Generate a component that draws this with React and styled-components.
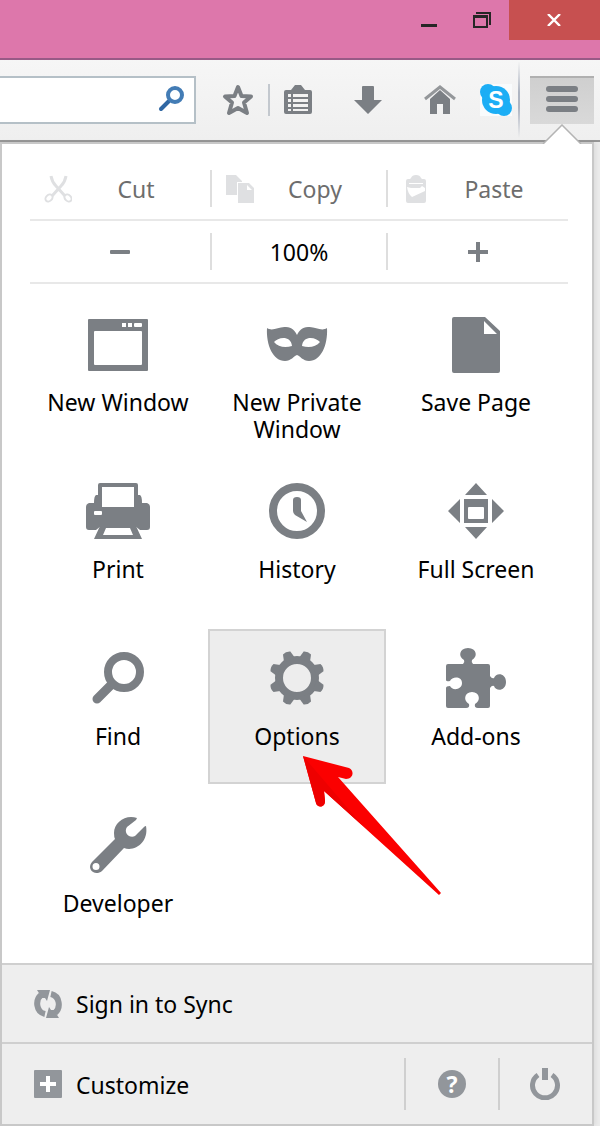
import React from 'react';
import styled, { createGlobalStyle, css } from 'styled-components';

const INK = '#7b7f84';
const SOFT = '#92969b';
const FAINT = '#dfe0e2';

const GlobalStyle = createGlobalStyle`
  *, *::before, *::after { box-sizing: border-box; }
  body { margin: 0; background: #ebebeb; }
  body, button, input {
    font-family: "Noto Sans", "Open Sans", "Liberation Sans", sans-serif;
    font-size: 23px;
    line-height: 27px;
    color: #000;
  }
  svg { display: block; flex: none; }
`;

const plainButton = css`
  appearance: none;
  margin: 0;
  padding: 0;
  border: 0;
  background: none;
  cursor: pointer;
`;

const Page = styled.div`
  width: 100%;
`;

const TitleBar = styled.header`
  display: flex;
  justify-content: flex-end;
  align-items: flex-start;
  height: 60px;
  background: #dd77ab;
  border-bottom: 2px solid #985a86;
`;

const WindowButton = styled.button`
  ${plainButton}
  display: flex;
  align-items: center;
  justify-content: center;
  width: ${p => (p.$close ? 91 : 53)}px;
  height: 40px;
  background: ${p => (p.$close ? '#c75050' : 'transparent')};
`;

const Toolbar = styled.div`
  display: flex;
  align-items: center;
  height: 82px;
  padding-right: 6px;
  background: linear-gradient(#f6f6f6, #efefef);
  border-bottom: 2px solid #979797;
`;

const SearchBox = styled.form`
  display: flex;
  align-items: center;
  flex: 1;
  min-width: 0;
  height: 48px;
  padding-right: 8px;
  background: #fff;
  border: 2px solid #b5c0c7;
  border-left: 0;
`;

const SearchInput = styled.input`
  flex: 1;
  min-width: 0;
  height: 44px;
  padding: 0 12px;
  border: 0;
  outline: 0;
  background: transparent;
`;

const ToolButton = styled.button`
  ${plainButton}
  width: 32px;
  height: 32px;
  margin-left: ${p => p.$gap || 0}px;
`;

const ToolDivider = styled.span`
  width: 2px;
  height: ${p => (p.$tall ? 76 : 32)}px;
  margin-left: ${p => p.$gap}px;
  background: ${p => (p.$tall ? 'linear-gradient(#f4f4f4, #aeb5c2 40%, #aeb5c2 60%, #efefef)' : '#c3c8ce')};
`;

const MenuButton = styled.button`
  ${plainButton}
  display: flex;
  justify-content: center;
  align-items: flex-start;
  width: 64px;
  height: 48px;
  margin-left: 10px;
  padding-top: 6px;
  background: linear-gradient(#cfcfcf, #d9d9d9);
  border-top: 2px solid #b0b0b0;
`;

const Panel = styled.main`
  position: relative;
  margin-right: 6px;
  background: #fff;
  border: 2px solid #c8c8c8;
  box-shadow: 2px 0 4px rgba(0, 0, 0, 0.06);
`;

const Pointer = styled.svg`
  position: absolute;
  right: 10px;
  top: -20px;
`;

const EditSection = styled.section`
  padding: 14px 24px 0 28px;
`;

const EditRow = styled.div`
  display: grid;
  grid-template-columns: 91fr 88fr 90fr;
  align-items: center;
  height: 63px;
  border-bottom: 2px solid #e8e8e8;
`;

const EditCell = styled.button`
  ${plainButton}
  display: flex;
  align-items: center;
  justify-content: center;
  height: 37px;
  padding-left: ${p => (p.$labelled ? 14 : 0)}px;
  border-right: 2px solid #dedede;
  color: #000;
  &:last-child { border-right: 0; }
  &:disabled { color: #6d6d6d; cursor: default; }
`;

const RowText = styled.span`
  padding-top: 2px;
`;

const EditLabel = styled(RowText)`
  flex: 1;
  padding-right: 10px;
  text-align: center;
`;

const TileGrid = styled.section`
  display: grid;
  grid-template-columns: repeat(3, 1fr);
  grid-auto-rows: 155px;
  gap: 12px 1px;
  padding: 11px 27px 12px;
`;

const Tile = styled.button`
  ${plainButton}
  position: relative;
  display: flex;
  flex-direction: column;
  align-items: center;
  gap: 12px;
  padding-top: 16px;
  border: 2px solid ${p => (p.$active ? '#d3d3d3' : 'transparent')};
  background: ${p => (p.$active ? '#ededed' : 'transparent')};
`;

const TileLabel = styled.span`
  max-width: 160px;
  text-align: center;
`;

const Callout = styled.svg`
  position: absolute;
  left: 93px;
  top: 125px;
  z-index: 1;
  pointer-events: none;
`;

const FooterRow = styled.div`
  display: flex;
  align-items: center;
  height: ${p => p.$height}px;
  background: #eee;
  border-top: 2px solid #cfcfcf;
`;

const FooterAction = styled.button`
  ${plainButton}
  display: flex;
  align-items: center;
  flex: 1;
  gap: 14px;
  height: 52px;
  padding-left: 32px;
`;

const FooterIcon = styled.button`
  ${plainButton}
  display: flex;
  align-items: center;
  justify-content: center;
  width: 94px;
  height: 52px;
  border-left: 2px solid #cfcfcf;
`;

const HelpBadge = styled.span`
  width: 28px;
  height: 28px;
  border-radius: 50%;
  background: ${SOFT};
  color: #fff;
  font-size: 23px;
  font-weight: 700;
  line-height: 28px;
  text-align: center;
`;

const Svg = ({ size = 64, fill = INK, children }) => (
  <svg width={size} height={size} viewBox={`0 0 ${size} ${size}`} fill={fill} aria-hidden="true">
    {children}
  </svg>
);

const icons = {
  window: (
    <path fillRule="evenodd" d="M3 6H61Q62 6 62 7V57Q62 58 61 58H3Q2 58 2 57V7Q2 6 3 6ZM9 18Q8 18 8 19V51Q8 52 9 52H55Q56 52 56 51V19Q56 18 55 18ZM36 10V14H40V10ZM42 10V14H46V10ZM49 10Q48 10 48 11V13Q48 14 49 14H55Q56 14 56 13V11Q56 10 55 10Z" />
  ),
  mask: (
    <path fillRule="evenodd" d="M2 15C8 19 14 13 21 14C27 14 30 18 32 22C34 18 37 14 43 14C50 13 56 19 62 15C63 32 56 48 44 48C38 48 35 43 32 42C29 43 26 48 20 48C8 48 1 32 2 15ZM9 29C13 24 26 22 27 33C20 35 13 34 9 29ZM55 29C51 24 38 22 37 33C44 35 51 34 55 29Z" />
  ),
  page: <path fillRule="evenodd" d="M10 4H41L56 18V58Q56 60 54 60H10Q8 60 8 58V6Q8 4 10 4ZM40 8V21H53Z" />,
  print: (
    <>
      <path fillRule="evenodd" d="M14 3H50Q52 3 52 5V15H54Q56 16 56 23H61Q64 24 64 27V47Q64 50 61 50H54L49 46H15L10 50H3Q0 50 0 47V27Q0 24 3 23H8Q8 16 10 15H12V5Q12 3 14 3ZM16 7V27H48V7ZM9 31Q8 31 8 32V34Q8 35 9 35H15Q16 35 16 34V32Q16 31 15 31Z" />
      <path fillRule="evenodd" d="M14 46H50L56 59H8ZM20 48L17 55H47L44 48Z" />
    </>
  ),
  history: (
    <>
      <circle cx="32" cy="31" r="24" fill="none" stroke={INK} strokeWidth="8" />
      <path d="M28 20Q28 17 32 17Q36 17 36 20V31L42 42L30 35Q28 33 28 31Z" />
    </>
  ),
  fullscreen: (
    <path fillRule="evenodd" d="M32 3L43 15H21ZM32 59L43 47H21ZM4 31L16 19V43ZM60 31L48 19V43ZM20 19H44V43H20ZM25 27Q24 27 24 28V38Q24 39 25 39H39Q40 39 40 38V28Q40 27 39 27Z" />
  ),
  find: (
    <g fill="none" stroke={INK}>
      <path d="M11 52L26 37" strokeWidth="9" strokeLinecap="round" />
      <circle cx="38" cy="25" r="16" strokeWidth="8" />
    </g>
  ),
  gear: (
    <g transform="translate(32 31)">
      <circle r="18" fill="none" stroke={INK} strokeWidth="8" />
      {[0, 1, 2, 3, 4, 5, 6, 7].map(n => (
        <path key={n} d="M-6 -19L-4 -27Q0 -29 4 -27L6 -19Z" transform={`rotate(${22.5 + n * 45})`} />
      ))}
    </g>
  ),
  puzzle: (
    <path d="M4 17H19Q21 15 20 13C14 10 15 1 24 1S34 10 28 13Q27 15 29 17H44Q46 17 46 19V29Q48 32 50 31C52 25 62 26 62 35S52 45 50 39Q48 38 46 41V59Q46 61 44 61H34Q30 61 31 57C37 54 36 45 28 45S19 54 25 57Q26 61 22 61H4Q2 61 2 59V41Q2 39 6 39C8 44 18 43 18 36S8 29 6 34Q2 35 2 33V19Q2 17 4 17Z" />
  ),
  wrench: (
    <path fillRule="evenodd" d="M51 4C40 0 28 8 28 19Q28 23 29 25L6 48C0 55 9 63 16 57L38 34C49 38 63 28 60 12Q59 12 58 13L49 22C44 25 37 19 41 13L50 6ZM10 49A3.5 3.5 0 1 1 10 56A3.5 3.5 0 1 1 10 49Z" />
  ),
};

const tiles = [
  ['window', 'New Window'],
  ['mask', 'New Private Window'],
  ['page', 'Save Page'],
  ['print', 'Print'],
  ['history', 'History'],
  ['fullscreen', 'Full Screen'],
  ['find', 'Find'],
  ['gear', 'Options'],
  ['puzzle', 'Add-ons'],
  ['wrench', 'Developer'],
];

const editActions = [
  {
    label: 'Cut',
    icon: (
      <g fill="none" stroke={FAINT}>
        <path d="M7 1Q8 7 12 11L21 21M22 1Q21 7 17 11L8 21" strokeWidth="3" />
        <ellipse cx="5" cy="23" rx="3" ry="4" transform="rotate(45 5 23)" strokeWidth="2" />
        <ellipse cx="24" cy="23" rx="3" ry="4" transform="rotate(-45 24 23)" strokeWidth="2" />
      </g>
    ),
  },
  {
    label: 'Copy',
    icon: (
      <path fillRule="evenodd" fill={FAINT} d="M0 0H10L16 6V7H11V20H0ZM12 8H23L28 13V28H12ZM21 10V15H26Z" />
    ),
  },
  {
    label: 'Paste',
    icon: (
      <path fillRule="evenodd" fill={FAINT} d="M9 3Q10 0 14 0T19 3L20 4H22Q24 4 24 6V26Q24 28 22 28H6Q4 28 4 26V6Q4 4 6 4H8ZM7 8V9H21V8ZM5 12Q6 19 10 22L23 16V13L20 11L18 13H9Z" />
    ),
  },
];

const syncHalf = (
  <>
    <path d="M11 24C2 22 1 10 7 5" fill="none" stroke={SOFT} strokeWidth="6" />
    <path d="M3 0H16L13 11L11 8L8 8Z" />
  </>
);

export default function App() {
  return (
    <Page>
      <GlobalStyle />
      <TitleBar>
        <WindowButton aria-label="Minimize">
          <svg width="17" height="20" viewBox="0 0 17 20"><path d="M0 14H16V17H0Z" fill="#262626" /></svg>
        </WindowButton>
        <WindowButton aria-label="Restore">
          <svg width="19" height="16" viewBox="0 0 19 16">
            <path fillRule="evenodd" fill="#262626" d="M3 0H18V13H16V2H3ZM0 3H15V16H0ZM2 6V14H13V6Z" />
          </svg>
        </WindowButton>
        <WindowButton $close aria-label="Close">
          <svg width="15" height="12" viewBox="0 0 15 12"><path d="M1 0L13 12M13 0L1 12" stroke="#fff" strokeWidth="2.4" /></svg>
        </WindowButton>
      </TitleBar>

      <Toolbar>
        <SearchBox onSubmit={e => e.preventDefault()}>
          <SearchInput type="text" aria-label="Search" />
          <ToolButton aria-label="Search">
            <Svg size={32}>
              <path d="M7 25L15 17" stroke="#3067a3" strokeWidth="4" strokeLinecap="round" />
              <circle cx="21" cy="11" r="7" fill="none" stroke="#437cb5" strokeWidth="4" />
            </Svg>
          </ToolButton>
        </SearchBox>
        <ToolButton $gap={26} aria-label="Bookmark this page">
          <Svg size={32}>
            <path d="M16 3L19.5 12L29 12.5L22 18.5L25 29L16 24L7 29L10 18.5L3 12.5L12.5 12Z" fill="none" stroke={INK} strokeWidth="4" strokeLinejoin="round" />
          </Svg>
        </ToolButton>
        <ToolDivider $gap={14} />
        <ToolButton $gap={12} aria-label="Show bookmarks">
          <Svg size={32}>
            <path fillRule="evenodd" d="M4 6H9L13 1H19L23 6H28Q30 6 30 8V28Q30 30 28 30H4Q2 30 2 28V8Q2 6 4 6ZM6 10V13H9V10ZM11 10V13H26V10ZM6 15V18H9V15ZM11 15V18H26V15ZM6 20V23H9V20ZM11 20V23H26V20ZM6 25V27H9V25ZM11 25V27H26V25Z" />
          </Svg>
        </ToolButton>
        <ToolButton $gap={38} aria-label="Downloads">
          <Svg size={32}><path d="M11 2H21Q22 2 22 3V16H30L16 30L2 16H10V3Q10 2 11 2Z" /></Svg>
        </ToolButton>
        <ToolButton $gap={40} aria-label="Home">
          <Svg size={32}>
            <path d="M1 15L16 3L31 15" fill="none" stroke="#94979a" strokeWidth="3" />
            <path d="M6 15L16 6L26 15V30H19V20H13V30H6Z" />
          </Svg>
        </ToolButton>
        <ToolButton $gap={24} aria-label="Skype">
          <Svg size={32} fill="#1caef5">
            <rect width="32" height="32" fill="#f9fbfc" />
            <circle cx="8" cy="8" r="8" />
            <circle cx="24" cy="24" r="8" />
            <circle cx="16" cy="16" r="14" />
            <text x="16" y="24" fill="#fff" fontFamily="Liberation Sans, sans-serif" fontWeight="700" fontSize="23" textAnchor="middle">S</text>
          </Svg>
        </ToolButton>
        <ToolDivider $tall $gap={6} />
        <MenuButton aria-label="Open menu" aria-expanded="true">
          <Svg size={32}>
            <rect y="2" width="32" height="6" rx="3" />
            <rect y="12" width="32" height="6" rx="3" />
            <rect y="22" width="32" height="6" rx="3" />
          </Svg>
        </MenuButton>
      </Toolbar>

      <Panel>
        <Pointer width="40" height="20" viewBox="0 0 40 20" aria-hidden="true">
          <path d="M1 20L20 1L39 20Z" fill="#fff" />
          <path d="M1 20L20 1L39 20" fill="none" stroke="#b4b4b4" strokeWidth="1.5" />
        </Pointer>
        <EditSection>
          <EditRow>
            {editActions.map(({ label, icon }) => (
              <EditCell key={label} $labelled disabled>
                <Svg size={28}>{icon}</Svg>
                <EditLabel>{label}</EditLabel>
              </EditCell>
            ))}
          </EditRow>
          <EditRow>
            <EditCell aria-label="Zoom out">
              <Svg size={20}><rect y="8" width="20" height="4" rx="1" /></Svg>
            </EditCell>
            <EditCell><RowText>100%</RowText></EditCell>
            <EditCell aria-label="Zoom in">
              <Svg size={20}><path d="M8 0H12V8H20V12H12V20H8V12H0V8H8Z" /></Svg>
            </EditCell>
          </EditRow>
        </EditSection>

        <TileGrid>
          {tiles.map(([icon, label]) => (
            <Tile key={label} $active={label === 'Options'}>
              <Svg>{icons[icon]}</Svg>
              <TileLabel>{label}</TileLabel>
              {label === 'Options' && (
                <Callout width="140" height="140" viewBox="0 0 140 140" aria-hidden="true">
                  <path d="M0 0L46 12C52 15 50 23 43 23L35 21L138 137L136 139L21 35L22 45C22 52 14 52 13 47Z" fill="#fb0000" />
                  <path d="M0 0L60 70L21 35L22 45C22 52 14 52 13 47Z" fill="#ee0000" />
                </Callout>
              )}
            </Tile>
          ))}
        </TileGrid>

        <FooterRow $height={79}>
          <FooterAction>
            <Svg size={28} fill={SOFT}>
              {syncHalf}
              <g transform="rotate(180 14 14)">{syncHalf}</g>
            </Svg>
            <RowText>Sign in to Sync</RowText>
          </FooterAction>
        </FooterRow>
        <FooterRow $height={82}>
          <FooterAction>
            <Svg size={28} fill={SOFT}>
              <rect width="28" height="28" rx="1" />
              <path d="M12 6H16V12H22V16H16V22H12V16H6V12H12Z" fill="#fff" />
            </Svg>
            <RowText>Customize</RowText>
          </FooterAction>
          <FooterIcon aria-label="Help">
            <HelpBadge>?</HelpBadge>
          </FooterIcon>
          <FooterIcon aria-label="Quit">
            <Svg size={32} fill={SOFT}>
              <path d="M8 7A12.5 12.5 0 1 0 22 7" fill="none" stroke={SOFT} strokeWidth="5" />
              <rect x="12" width="6" height="12" />
            </Svg>
          </FooterIcon>
        </FooterRow>
      </Panel>
    </Page>
  );
}
